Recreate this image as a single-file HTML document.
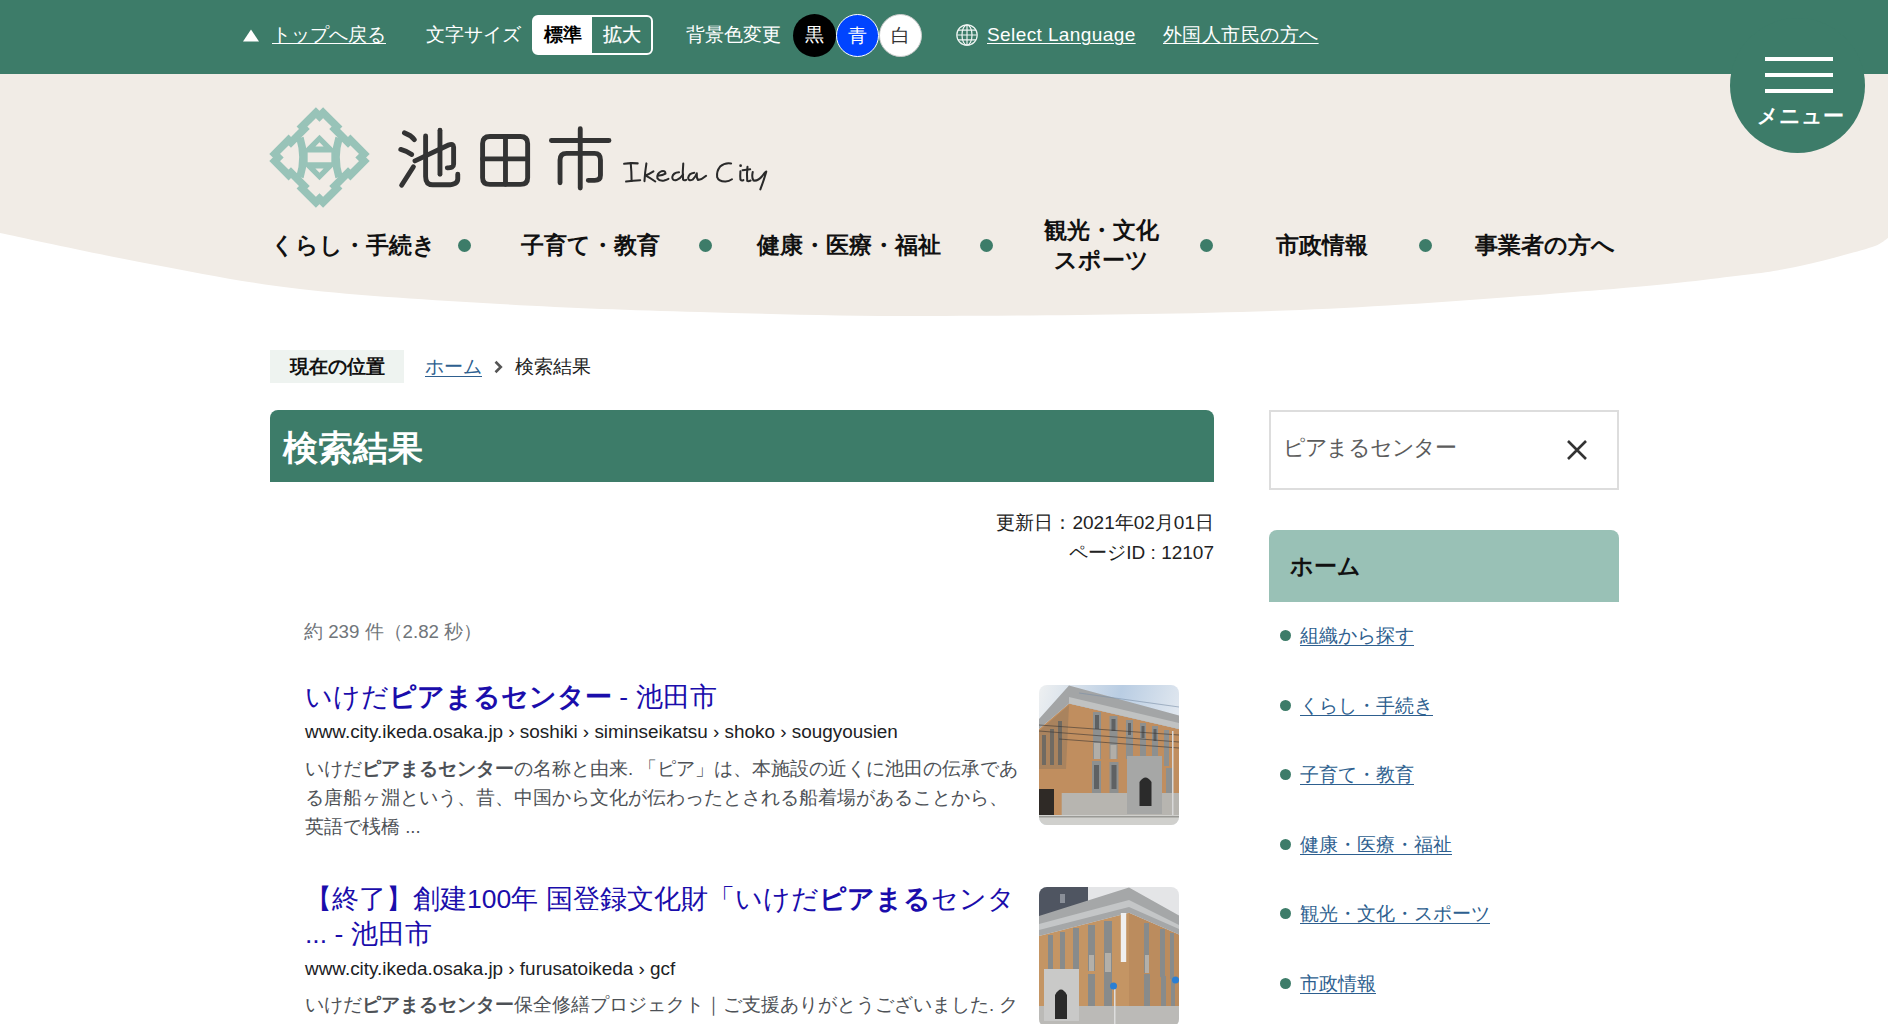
<!DOCTYPE html>
<html lang="ja">
<head>
<meta charset="utf-8">
<title>検索結果 | 池田市</title>
<style>
*{margin:0;padding:0;box-sizing:border-box}
html,body{width:1888px;height:1024px;overflow:hidden;background:#fff}
body{font-family:"Liberation Sans",sans-serif;color:#000;position:relative}
.abs{position:absolute;white-space:nowrap}
#hdrbg{position:absolute;left:0;top:0;width:1888px;height:330px}
#topbar{position:absolute;left:0;top:0;width:1888px;height:74px;background:#3d7c69}
.tb{color:#fff;font-size:19px;line-height:20px;top:25px}
.tb u{text-decoration:underline;text-underline-offset:2px;text-decoration-thickness:1px}
.circ{position:absolute;top:14px;width:43px;height:43px;border-radius:50%;text-align:center;line-height:41px;font-size:19px}
#menu{position:absolute;left:1730px;top:18px;width:135px;height:135px;border-radius:50%;background:#3d7c69}
.hl{position:absolute;left:1765px;width:68px;height:4px;background:#fff}
.nav{font-size:23px;font-weight:bold;line-height:30px;color:#111}
.side{left:1300px;font-size:19.45px;line-height:22px;color:#2e5f8f;text-decoration:underline;text-underline-offset:3px}
.side::before{content:"";position:absolute;left:-20px;top:6px;width:11px;height:11px;border-radius:50%;background:#3d7c69}
.dot{position:absolute;width:13px;height:13px;border-radius:50%;background:#3d7c69;top:239px}
</style>
</head>
<body>
<svg id="hdrbg" width="1888" height="330" viewBox="0 0 1888 330"><path fill="#f1ece6" d="M0,0 L1888,0 L1888,238 C1885.8,239.3 1882.3,243.2 1875,246 C1867.7,248.8 1856.5,251.7 1844,255 C1831.5,258.3 1816.7,262.7 1800,266 C1783.3,269.3 1777.3,271.0 1744,275 C1710.7,279.0 1674.0,284.2 1600,290 C1526.0,295.8 1409.3,305.7 1300,310 C1190.7,314.3 1044.0,315.7 944,316 C844.0,316.3 774.0,314.0 700,312 C626.0,310.0 566.7,307.8 500,304 C433.3,300.2 358.3,295.7 300,289 C241.7,282.3 200.0,273.3 150,264 C100.0,254.7 25.0,238.2 0,233 Z"/></svg>

<div id="topbar"></div>
<!-- top bar items -->
<svg class="abs" style="left:243px;top:29px" width="16" height="13" viewBox="0 0 16 13"><polygon points="8,0.5 16,12.5 0,12.5" fill="#fff"/></svg>
<div class="abs tb" style="left:272px"><u>トップへ戻る</u></div>
<div class="abs tb" style="left:426px">文字サイズ</div>
<div class="abs" style="left:532px;top:15px;width:121px;height:40px;border:2px solid #fff;border-radius:6px;background:linear-gradient(to right,#fff 58px,transparent 58px)">
  <div class="abs" style="left:0;top:0;width:58px;height:36px;color:#000;font-weight:bold;font-size:19px;line-height:36px;text-align:center">標準</div>
  <div class="abs" style="left:58px;top:0;width:59px;height:36px;color:#fff;font-size:19px;line-height:36px;text-align:center;-webkit-text-stroke:0.3px #fff">拡大</div>
</div>
<div class="abs tb" style="left:686px">背景色変更</div>
<div class="circ" style="left:793px;background:#000;color:#fff">黒</div>
<div class="circ" style="left:836px;background:#0044ff;color:#fff;border:1.5px solid #fff">青</div>
<div class="circ" style="left:879px;background:#fff;color:#333;border:1.5px solid #ccc">白</div>
<svg class="abs" style="left:956px;top:24px" width="22" height="22" viewBox="0 0 22 22" fill="none" stroke="#f0f5f3" stroke-width="1.2"><circle cx="11" cy="11" r="10.2"/><ellipse cx="11" cy="11" rx="5" ry="10.2"/><line x1="11" y1="1" x2="11" y2="21"/><path d="M1,11 H21 M2,6.2 H20 M2,15.8 H20"/></svg>
<div class="abs tb" style="left:987px"><u style="letter-spacing:0.4px">Select Language</u></div>
<div class="abs tb" style="left:1163px"><u style="letter-spacing:0.45px">外国人市民の方へ</u></div>

<!-- menu -->
<div id="menu"></div>
<div class="hl" style="top:57px"></div>
<div class="hl" style="top:73px"></div>
<div class="hl" style="top:89px"></div>
<div class="abs" style="left:1757px;top:104px;color:#fff;font-size:21px;font-weight:bold;line-height:24px">メニュー</div>

<!-- logo -->
<svg class="abs" style="left:268px;top:106px" width="103" height="103" viewBox="0 0 100 100">
 <g fill="none" stroke="#98c3b8" stroke-width="7.4" stroke-linejoin="miter" stroke-miterlimit="10">
  <path d="M53.50,6.50 L67.00,20.00 L64.70,22.30 L77.70,35.30 L80.00,33.00 L93.50,46.50 L90.00,50.00 L93.50,53.50 L80.00,67.00 L77.70,64.70 L64.70,77.70 L67.00,80.00 L53.50,93.50 L50.00,90.00 L46.50,93.50 L33.00,80.00 L35.30,77.70 L22.30,64.70 L20.00,67.00 L6.50,53.50 L10.00,50.00 L6.50,46.50 L20.00,33.00 L22.30,35.30 L35.30,22.30 L33.00,20.00 L46.50,6.50 L50.00,10.00 Z"/>
  <path d="M31,31 Q37,50 31,69 M69,31 Q63,50 69,69"/>
 </g>
 <path fill="#98c3b8" fill-rule="evenodd" d="M50,28 L65,43 L65,57 L50,72 L35,57 L35,43 Z M38.5,45.1 H61.5 V54.6 H38.5 Z M50,35.2 L54,39.4 H46 Z M50,64.8 L54,60.6 H46 Z"/>
</svg>
<svg class="abs" style="left:390px;top:118px" width="230" height="80" viewBox="0 0 1888 657">
<g fill="none" stroke="#333" stroke-width="40" stroke-linecap="round" stroke-linejoin="round">
 <path d="M118,122 Q170,140 200,178"/>
 <path d="M88,258 Q140,272 178,300"/>
 <path d="M95,552 L192,400"/>
 <path d="M410,100 V462"/>
 <path d="M292,148 V480 Q292,548 350,548 H470 Q556,548 556,500 V462"/>
 <path d="M205,352 L480,222 Q520,205 522,240 V380 Q522,412 470,410"/>
 <path d="M760,210 Q760,152 820,152 H1070 Q1130,152 1130,210 V490 Q1130,545 1070,545 H820 Q760,545 760,490 Z"/>
 <path d="M948,152 V545 M760,336 H1130"/>
 <path d="M1562,88 V185 M1325,185 H1798 M1562,185 V575"/>
 <path d="M1396,532 V345 Q1396,290 1450,290 H1680 Q1728,290 1728,345 V470 Q1728,512 1680,512 H1628"/>
</g>
</svg>
<svg class="abs" style="left:618px;top:150px" width="160" height="46" viewBox="0 0 1888 543">
<g fill="none" stroke="#2a2a2a" stroke-width="24" stroke-linecap="round" stroke-linejoin="round">
 <path d="M72,162 Q150,150 232,158"/>
 <path d="M150,155 Q160,260 160,365"/>
 <path d="M95,372 Q180,360 262,356"/>
 <path d="M335,158 Q318,260 312,368"/>
 <path d="M418,252 Q360,290 322,300 Q380,330 440,372"/>
 <path d="M470,305 Q530,300 560,280 Q560,240 515,250 Q455,275 465,335 Q490,370 545,360 Q570,352 595,340"/>
 <path d="M720,262 Q650,265 640,320 Q640,365 690,355 Q740,335 768,290"/>
 <path d="M770,160 Q760,260 768,350 Q780,365 805,352"/>
 <path d="M900,268 Q835,275 828,330 Q830,370 880,350 Q915,320 930,275 Q925,330 945,355 Q990,350 1040,305"/>
 <path d="M1335,158 Q1260,145 1205,195 Q1160,250 1170,320 Q1190,375 1270,372 Q1310,368 1345,345"/>
 <path d="M1445,250 Q1440,310 1445,350 Q1460,368 1480,355"/>
 <path d="M1528,198 Q1518,280 1525,365 Q1540,372 1565,360"/>
 <path d="M1470,238 Q1515,232 1560,228"/>
 <path d="M1590,260 Q1575,330 1600,360 Q1650,370 1700,310 Q1740,255 1750,255 Q1720,360 1680,465"/>
</g>
<circle cx="1447" cy="185" r="16" fill="#2a2a2a"/>
</svg>

<!-- nav -->
<div class="abs nav" style="left:271px;top:230px">くらし・手続き</div>
<div class="dot" style="left:458px"></div>
<div class="abs nav" style="left:521px;top:230px">子育て・教育</div>
<div class="dot" style="left:699px"></div>
<div class="abs nav" style="left:757px;top:230px">健康・医療・福祉</div>
<div class="dot" style="left:980px"></div>
<div class="abs nav" style="left:1043px;top:215px;text-align:center;width:117px;white-space:normal">観光・文化<br>スポーツ</div>
<div class="dot" style="left:1200px"></div>
<div class="abs nav" style="left:1276px;top:230px">市政情報</div>
<div class="dot" style="left:1419px"></div>
<div class="abs nav" style="left:1475px;top:230px">事業者の方へ</div>

<!-- breadcrumb -->
<div class="abs" style="left:270px;top:350px;width:134px;height:33px;background:#eef3f0;font-size:19.2px;font-weight:bold;line-height:33px;text-align:center;color:#111">現在の位置</div>
<div class="abs" style="left:425px;top:356px;font-size:19.2px;line-height:22px;color:#2e5f8f"><u style="text-underline-offset:3px">ホーム</u></div>
<svg class="abs" style="left:493px;top:360px" width="11" height="14" viewBox="0 0 11 14"><path d="M2.5,1.8 L7.8,7 L2.5,12.2" fill="none" stroke="#555" stroke-width="2.6"/></svg>
<div class="abs" style="left:515px;top:356px;font-size:19.2px;line-height:22px;color:#222">検索結果</div>

<!-- title -->
<div class="abs" style="left:270px;top:410px;width:944px;height:72px;background:#3d7c69;border-radius:8px 8px 0 0"></div>
<div class="abs" style="left:283px;top:427px;font-size:35px;font-weight:bold;line-height:42px;color:#fff">検索結果</div>

<div class="abs" style="left:900px;top:508px;width:314px;text-align:right;font-size:19px;line-height:30px;color:#222">更新日：2021年02月01日<br>ページID : 12107</div>

<!-- results -->
<div class="abs" style="left:304px;top:620px;font-size:18.7px;line-height:24px;color:#70757a">約 239 件（2.82 秒）</div>

<div class="abs" style="left:305px;top:681px;font-size:26.5px;line-height:32px;color:#1a0dab">いけだ<b>ピアまるセンター</b> - 池田市</div>
<div class="abs" style="left:305px;top:720px;font-size:18.9px;line-height:24px;color:#202124">www.city.ikeda.osaka.jp › soshiki › siminseikatsu › shoko › sougyousien</div>
<div class="abs" style="left:305px;top:754px;font-size:18.6px;line-height:29px;color:#4d5156">いけだ<b>ピアまるセンター</b>の名称と由来. 「ピア」は、本施設の近くに池田の伝承であ<br>る唐船ヶ淵という、昔、中国から文化が伝わったとされる船着場があることから、<br>英語で桟橋 ...</div>
<svg class="abs" style="left:1039px;top:685px;border-radius:8px" width="140" height="140" viewBox="0 0 140 140">
 <defs><linearGradient id="sky1" x1="0" y1="0" x2="1" y2="0.3"><stop offset="0" stop-color="#eef0f1"/><stop offset="0.55" stop-color="#b9cde3"/><stop offset="1" stop-color="#e3e9f0"/></linearGradient></defs>
 <rect width="140" height="140" fill="url(#sky1)"/>
 <polygon points="0,44 30,18.4 140,44 140,110 0,110" fill="#c08e5f"/>
 <polygon points="0,46 30,20 27,84 0,84" fill="#a9835e"/>
 <g fill="#6f6a62"><rect x="3" y="50" width="4" height="30"/><rect x="11" y="44" width="4" height="36"/><rect x="19" y="36" width="4" height="44"/></g>
 <polygon points="0,34 30,0.5 140,30.5 140,44 30,18.4 0,44" fill="#a3a5a6"/>
 <polygon points="30,12 140,38 140,44 30,18.4" fill="#c0c2c2"/>
 <rect x="0" y="84" width="24" height="48" fill="#c08e5f"/>
 <rect x="0" y="104" width="15" height="27" fill="#2f2a26"/>
 <polygon points="22.7,108 140,108 140,130 22.7,130" fill="#b7b5b0"/>
 <g fill="#8d9090">
  <rect x="54" y="27" width="8" height="47"/><rect x="70.5" y="31" width="8" height="43"/><rect x="87" y="35" width="7" height="39"/>
  <rect x="101" y="38" width="6" height="36"/><rect x="113" y="41" width="6" height="36"/><rect x="125" y="45" width="5" height="36"/>
  <rect x="53" y="76" width="9" height="32"/><rect x="70.5" y="77" width="9" height="31"/><rect x="127" y="83" width="6" height="25"/>
 </g>
 <g fill="#5e6163"><rect x="56" y="30" width="4" height="14"/><rect x="72.5" y="34" width="4" height="12"/><rect x="89" y="38" width="3" height="12"/><rect x="102.5" y="41" width="3" height="12"/><rect x="114.5" y="44" width="3" height="12"/><rect x="55" y="80" width="5" height="24"/><rect x="72.5" y="80" width="5" height="24"/></g>
 <g fill="#b1aea8"><rect x="55" y="58" width="6" height="16"/><rect x="71.5" y="60" width="6" height="14"/></g>
 <rect x="88" y="71" width="35" height="58" fill="#a6a7a6"/>
 <path d="M100.5,121 V97 Q106.5,88 112.5,97 V121 Z" fill="#2b2b2b"/>
 <g stroke="#3c3834" stroke-width="0.6" fill="none"><path d="M0,40 L140,50"/><path d="M0,46 L140,57"/><path d="M20,54 L140,63"/><path d="M40,8 L140,22" stroke="#7a8ea6"/></g>
 <rect x="0" y="130" width="140" height="10" fill="#d0d0cd"/>
 <rect x="0" y="131" width="140" height="1.5" fill="#9a9a96"/>
 <rect x="133" y="46" width="1.5" height="84" fill="#d8d8d8"/>
</svg>

<div class="abs" style="left:305px;top:882px;font-size:26.5px;line-height:35px;color:#1a0dab">【終了】創建100年 国登録文化財「いけだ<b>ピアまる</b>センタ<br>... - 池田市</div>
<div class="abs" style="left:305px;top:957px;font-size:18.9px;line-height:24px;color:#202124">www.city.ikeda.osaka.jp › furusatoikeda › gcf</div>
<div class="abs" style="left:305px;top:990px;font-size:18.6px;line-height:29px;color:#4d5156">いけだ<b>ピアまるセンター</b>保全修繕プロジェクト｜ご支援ありがとうございました. ク</div>
<svg class="abs" style="left:1039px;top:887px;border-radius:8px" width="140" height="140" viewBox="0 0 140 140">
 <rect width="140" height="140" fill="#e4e5e7"/>
 <rect x="0" y="0" width="49" height="30" fill="#4f5561"/>
 <rect x="21" y="7" width="5" height="9" fill="#8a8f98"/>
 <polygon points="0,49 90,25.7 90,119 0,119" fill="#c49564"/>
 <polygon points="90,25.7 140,47.6 140,119 90,119" fill="#bb8c5e"/>
 <polygon points="0,29 90,0.4 140,28.4 140,47.6 90,25.7 0,49" fill="#a5a7a8"/>
 <polygon points="0,37 90,13 140,38 140,42 90,20 0,43" fill="#c4c6c7"/>
 <g fill="#888b8b">
  <rect x="9" y="48" width="5" height="35"/><rect x="21" y="45" width="5" height="37"/><rect x="34" y="41" width="6" height="42"/>
  <rect x="49" y="38" width="7" height="46"/><rect x="65" y="34" width="8" height="52"/>
  <rect x="105" y="36" width="5" height="50"/><rect x="121" y="42" width="5" height="48"/><rect x="131" y="46" width="4" height="46"/>
  <rect x="49" y="87" width="7" height="32"/><rect x="65" y="86" width="8" height="33"/>
  <rect x="105" y="87" width="6" height="32"/><rect x="122" y="89" width="5" height="30"/><rect x="132" y="91" width="4" height="28"/>
 </g>
 <g fill="#b3b0aa"><rect x="50" y="68" width="5" height="16"/><rect x="66" y="66" width="6" height="19"/><rect x="106" y="68" width="4" height="18"/></g>
 <rect x="81.8" y="26" width="5.4" height="49" fill="#f0f0f0"/>
 <rect x="0" y="119" width="140" height="21" fill="#bbbab7"/>
 <rect x="5" y="82" width="35" height="52" fill="#c9c9c8"/>
 <path d="M16,132 V108 Q22,97 28,108 V132 Z" fill="#2a2a2a"/>
 <rect x="75" y="102" width="1.5" height="38" fill="#dddddd"/>
 <circle cx="74.5" cy="99" r="3.5" fill="#2a7fd4"/>
 <circle cx="136.5" cy="93" r="3.5" fill="#2a7fd4"/>
</svg>

<!-- sidebar -->
<div class="abs" style="left:1269px;top:410px;width:350px;height:80px;border:2px solid #ddd;background:#fff"></div>
<div class="abs" style="left:1283px;top:435px;font-size:22px;line-height:26px;color:#5c5c5c;letter-spacing:-1.3px">ピアまるセンター</div>
<svg class="abs" style="left:1566px;top:439px" width="22" height="22" viewBox="0 0 22 22"><path d="M2,2 L20,20 M20,2 L2,20" stroke="#333" stroke-width="2.6"/></svg>

<div class="abs" style="left:1269px;top:530px;width:350px;height:72px;background:#99c1b6;border-radius:8px 8px 0 0"></div>
<div class="abs" style="left:1290px;top:552px;font-size:23px;font-weight:bold;line-height:28px;color:#111">ホーム</div>

<div class="abs side" style="top:624px">組織から探す</div>
<div class="abs side" style="top:694px">くらし・手続き</div>
<div class="abs side" style="top:763px">子育て・教育</div>
<div class="abs side" style="top:833px">健康・医療・福祉</div>
<div class="abs side" style="top:902px">観光・文化・スポーツ</div>
<div class="abs side" style="top:972px">市政情報</div>

</body>
</html>
